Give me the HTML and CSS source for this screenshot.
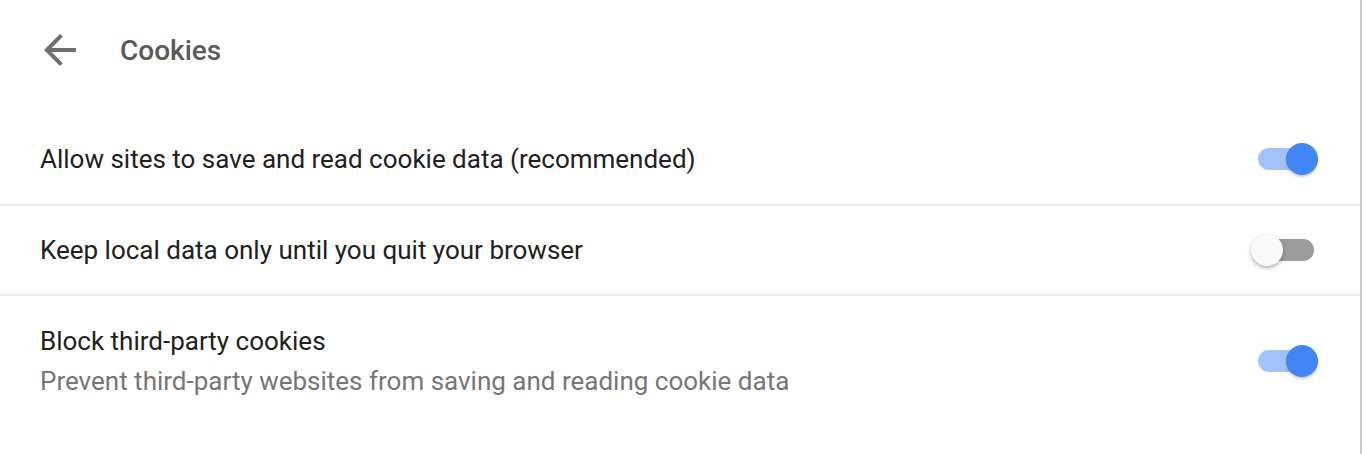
FILE: index.html
```html
<!DOCTYPE html>
<html>
<head>
<meta charset="utf-8">
<link rel="stylesheet" href="styles.css">
</head>
<body>
<div class="page">
  <div class="header">
    <svg class="back" viewBox="0 0 24 24" width="48" height="48"><path d="M20 11H7.83l5.59-5.59L12 4l-8 8 8 8 1.41-1.41L7.83 13H20v-2z"/></svg>
    <div class="title">Cookies</div>
  </div>
  <div class="list">
    <div class="row">
      <div class="text"><div class="label">Allow sites to save and read cookie data (recommended)</div></div>
      <div class="toggle on"><div class="track"></div><div class="knob"></div></div>
    </div>
    <div class="row">
      <div class="text"><div class="label">Keep local data only until you quit your browser</div></div>
      <div class="toggle"><div class="track"></div><div class="knob"></div></div>
    </div>
    <div class="row tall">
      <div class="text">
        <div class="label">Block third-party cookies</div>
        <div class="sub">Prevent third-party websites from saving and reading cookie data</div>
      </div>
      <div class="toggle on"><div class="track"></div><div class="knob"></div></div>
    </div>
  </div>
</div>
</body>
</html>
```
FILE: styles.css
```css
html, body { margin: 0; padding: 0; background: #fff; }
body { font-family: Roboto, "Noto Sans", sans-serif; }
.page {
  width: 1360px;
  height: 454px;
  border-right: 2px solid #c9c9c9;
}
.header {
  height: 100px;
  display: flex;
  align-items: center;
}
.back {
  fill: #6f6f6f;
  margin-left: 36px;
  margin-right: 36px;
  flex: none;
}
.title {
  font-size: 28px;
  font-weight: 500;
  color: #5a5a5a;
}
.list { margin-top: 14px; }
.row {
  min-height: 90px;
  display: flex;
  align-items: center;
  justify-content: space-between;
  padding-left: 40px;
  padding-right: 46px;
  box-sizing: border-box;
}
.row + .row { border-top: 2px solid #ececec; }
.row.tall { padding-top: 25px; padding-bottom: 23px; }
.label {
  font-size: 26px;
  line-height: 40px;
  color: #212121;
}
.sub {
  font-size: 26px;
  line-height: 40px;
  color: #767676;
}
.toggle {
  position: relative;
  width: 56px;
  height: 22px;
  flex: none;
}
.track {
  width: 56px;
  height: 22px;
  border-radius: 11px;
  background: #9b9b9b;
}
.knob {
  position: absolute;
  top: -5px;
  left: -7px;
  width: 32px;
  height: 32px;
  border-radius: 50%;
  background: #fafafa;
  box-shadow: 0 2px 4px rgba(0,0,0,0.3);
}
.toggle.on .track { background: #a2c3fa; }
.toggle.on .knob {
  left: 28px;
  background: #4285f4;
  box-shadow: 0 2px 3px rgba(0,0,0,0.2);
}
```
